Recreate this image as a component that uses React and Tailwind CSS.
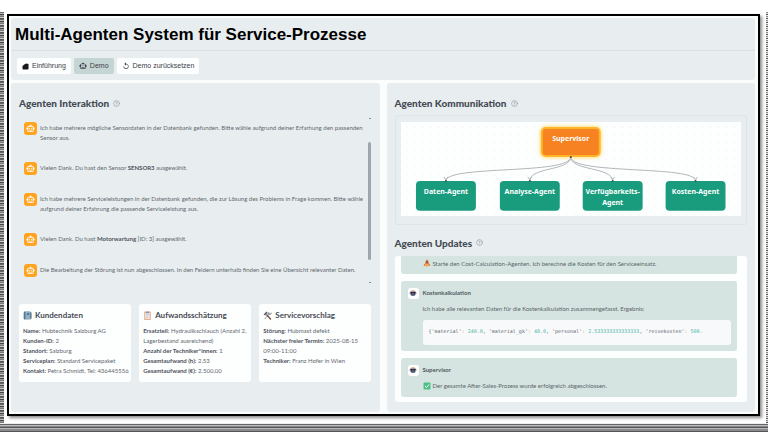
import { CircleHelp } from 'lucide-react'
import { MdOutlineSmartToy, MdReplay } from 'react-icons/md'

const messages = [
  ['Ich habe mehrere mögliche Sensordaten in der Datenbank gefunden. Bitte wähle aufgrund deiner Erfarhung den passenden', <br key="b" />, 'Sensor aus.'],
  ['Vielen Dank. Du hast den Sensor ', <b key="b" className="text-[#4d525c]">SENSOR3</b>, ' ausgewählt.'],
  ['Ich habe mehrere Serviceleistungen in der Datenbank gefunden, die zur Lösung des Problems in Frage kommen. Bitte wähle', <br key="b" />, 'aufgrund deiner Erfahrung die passende Serviceleistung aus.'],
  ['Vielen Dank. Du hast ', <b key="b" className="text-[#4d525c]">Motorwartung</b>, ' [ID: 3] ausgewählt.'],
  ['Die Bearbeitung der Störung ist nun abgeschlossen. In den Feldern unterhalb finden Sie eine Übersicht relevanter Daten.'],
]

const cards = [
  {
    title: 'Kundendaten',
    icon: BookIcon,
    rows: [
      ['Name:', 'Hubtechnik Salzburg AG'],
      ['Kunden-ID:', '2'],
      ['Standort:', 'Salzburg'],
      ['Serviceplan:', 'Standard Servicepaket'],
      ['Kontakt:', 'Petra Schmidt, Tel: 436445556'],
    ],
  },
  {
    title: 'Aufwandsschätzung',
    icon: ClipboardIcon,
    rows: [
      ['Ersatzteil:', 'Hydraulikschlauch (Anzahl 2,', 'Lagerbestand ausreichend)'],
      ['Anzahl der Techniker*innen:', '1'],
      ['Gesamtaufwand (h):', '2.53'],
      ['Gesamtaufwand (€):', '2.500,00'],
    ],
  },
  {
    title: 'Servicevorschlag',
    icon: ToolsIcon,
    rows: [
      ['Störung:', 'Hubmast defekt'],
      ['Nächster freier Termin:', '2025-08-15', '09:00-11:00'],
      ['Techniker:', 'Franz Hofer in Wien'],
    ],
  },
]

const result = [
  ['material', '240.0'],
  ['material_gk', '48.0'],
  ['personal', '2.533333333333333'],
  ['reisekosten', '500.'],
]

const agents = [
  { lines: ['Daten-Agent'], x: 15 },
  { lines: ['Analyse-Agent'], x: 99 },
  { lines: ['Verfügbarkeits-', 'Agent'], x: 182 },
  { lines: ['Kosten-Agent'], x: 265 },
]

function HouseIcon() {
  return (
    <svg viewBox="0 0 14 14" className="size-[7px] shrink-0" fill="#16181b">
      <path d="M1 6 6 2l3-1 4 1v10l-2 1H2l-1-1z" />
    </svg>
  )
}

function BookIcon() {
  return (
    <svg viewBox="0 0 16 16" className="size-[9px] shrink-0">
      <path d="M3 1h10l2 2v10l-2 2H3l-2-2V3z" fill="#7f9bb0" />
      <path d="M5 1h7v13H5z" fill="#8fb0c8" />
      <path d="M3 1v14M14 3v10" stroke="#4a6579" strokeWidth="1.5" />
      <path d="M7 4h4v3H7z" fill="#4d6e87" />
    </svg>
  )
}

function ClipboardIcon() {
  return (
    <svg viewBox="0 0 16 16" className="size-[9px] shrink-0">
      <rect x="2" y="1" width="12" height="15" rx="1" fill="#e8b48c" />
      <path d="M4 3h8v11H4z" fill="#f1eef0" />
      <path d="M5 1h6v3H5z" fill="#8d98a7" />
      <path d="M5 6h6M5 9h6M5 12h4" stroke="#a7b1c4" />
    </svg>
  )
}

function ToolsIcon() {
  return (
    <svg viewBox="0 0 16 16" className="size-[9px] shrink-0" fill="none">
      <path d="m3 14 9-10" stroke="#b0b8be" strokeWidth="2" />
      <path d="M10 2v3l3 1 2-3" stroke="#8d989f" strokeWidth="2" />
      <path d="m6 6 8 9" stroke="#7b4b42" strokeWidth="2.5" />
      <path d="m1 6 5-5 3 3-3 1-2 3z" fill="#59656e" />
    </svg>
  )
}

function RocketIcon() {
  return (
    <svg viewBox="0 0 16 16" className="size-2 shrink-0">
      <path d="M8 1c4 2 4 6 3 10H5C4 7 5 3 8 1z" fill="#d9743a" />
      <path d="M5 8 1 13l4 1zM11 8l4 5-4 1z" fill="#e0632d" />
      <path d="M4 11h8l-2 4H6z" fill="#f6a93c" />
      <circle cx="8" cy="6" r="2" fill="#8f5b4a" />
    </svg>
  )
}

function CheckIcon() {
  return (
    <svg viewBox="0 0 16 16" className="size-2 shrink-0">
      <rect x="1" y="1" width="14" height="14" rx="2" fill="#4dc088" />
      <path d="m4 8 3 3 5-6" fill="none" stroke="#fff" strokeWidth="2" />
    </svg>
  )
}

function BotFace() {
  return (
    <svg viewBox="0 0 24 24" className="size-2">
      <path d="M4 8h16l3 4-3 5-3 3H7l-3-3-3-5z" fill="#9298aa" />
      <path d="M7 3h10v5H7z" fill="#e4bda4" />
      <path d="M4 8h16v5H4z" fill="#3c354d" />
      <path d="M6 13h12v5l-3 2H9l-3-2z" fill="#555b70" />
      <circle cx="8" cy="12" r="2" fill="#252536" />
      <circle cx="16" cy="12" r="2" fill="#252536" />
    </svg>
  )
}

function Heading({ children }) {
  return (
    <h2 className="flex items-center gap-1 text-[10px] leading-4 font-black text-[#454a55]">
      {children}
      <CircleHelp size={7} className="text-[#8b929b]" />
    </h2>
  )
}

function Card({ title, icon: Icon, rows }) {
  return (
    <article className="min-w-0 rounded-[3px] bg-[#fdfefe] px-1 py-1.5">
      <h3 className="flex items-center gap-[3px] text-[8px] leading-[10px] font-bold text-[#464b54]">
        <Icon />
        {title}
      </h3>
      <dl className="mt-1.5 text-[6px] leading-[10px] whitespace-nowrap text-[#62676f]">
        {rows.map(([label, value, rest]) => (
          <div key={label}>
            <dt className="inline font-bold text-[#4d525c]">{label}</dt> <dd className="inline">{value}</dd>
            {rest && <dd>{rest}</dd>}
          </div>
        ))}
      </dl>
    </article>
  )
}

function AgentGraph() {
  return (
    <div className="rounded-[3px] border border-[#dde3e6] px-[5px] pt-1.5 pb-2">
      <svg viewBox="0 0 341 94" className="block w-full bg-[#fdfefe] font-['Noto_Sans',sans-serif] text-[7px] font-bold">
        <defs>
          <pattern id="dots" width="8" height="8" patternUnits="userSpaceOnUse">
            <circle cx="6" cy="5" r=".5" fill="#e3e5e8" />
          </pattern>
          <filter id="glow" x="-20%" y="-30%" width="140%" height="160%">
            <feDropShadow dx="0" dy="0" stdDeviation="2" floodColor="#ffd43b" floodOpacity="1" />
          </filter>
        </defs>
        <rect width="341" height="94" fill="url(#dots)" />
        <rect x="141" y="6" width="58" height="28" rx="4" fill="#f68220" stroke="#ffb52c" strokeWidth="2" filter="url(#glow)" />
        <text x="170" y="19" fill="#fff" textAnchor="middle">Supervisor</text>
        <g fill="none" stroke="#b3b5bb">
          <path d="M170 35C170 53 45 43 45 59" />
          <path d="M170 35C170 49 129 45 129 59" />
          <path d="M170 35C170 49 212 45 212 59" />
          <path d="M170 35C170 53 295 43 295 59" />
          <path d="m43 55 2 3 2-3m80 0 2 3 2-3m79 0 2 3 2-3m79 0 2 3 2-3" />
        </g>
        <circle cx="170" cy="35" r="1" fill="#454552" />
        {agents.map(({ lines, x }) => (
          <g key={x}>
            <rect x={x} y="59" width="60" height="30" rx="4" fill="#189c7d" />
            <circle cx={x + 30} cy="59" r="1" fill="#42505a" />
            {lines.map((line, i) => (
              <text key={line} x={x + 30} y={72 + i * 11} fill="#fff" textAnchor="middle">
                {line}
              </text>
            ))}
          </g>
        ))}
      </svg>
    </div>
  )
}

function Update({ title, children }) {
  return (
    <article className="flex gap-1 rounded-[3px] bg-[#d5e4e0] pt-[7px] pr-1.5 pb-1.5 pl-[7px]">
      <span className="flex size-[11px] shrink-0 items-center justify-center rounded-[3px] bg-white">
        <BotFace />
      </span>
      <div className="min-w-0 flex-1">
        <h3 className="text-[6px] leading-[10px] font-bold text-[#515963]">{title}</h3>
        {children}
      </div>
    </article>
  )
}

export default function App() {
  return (
    <div className="flex min-h-screen flex-col overflow-hidden bg-white font-[Lato,sans-serif]">
      <div className="flex flex-1 pt-3">
        <div className="w-1 bg-[repeating-linear-gradient(#666_0_1px,#bbb_1px_2px,#444_2px_3px,#999_3px_4px,#777_4px_5px,#ccc_5px_6px,#555_6px_7px)]" />
        <div className="mt-0.5 mr-1.5 mb-[7px] ml-[3px] flex min-w-0 flex-1 flex-col gap-[3px] border-2 border-black bg-[#fbfcfc] py-0.5 pr-[3px] pl-0.5 shadow-[2px_2px_3px_#888]">
          <header className="rounded-[3px] bg-[#e8eef0]">
            <h1 className="border-b border-[#dbe1e4] px-1 pt-[5px] pb-[3px] font-['Liberation_Sans',Arial,sans-serif] text-[17px] leading-6 font-bold text-black">
              Multi-Agenten System für Service-Prozesse
            </h1>
            <nav className="flex gap-[3px] px-1.5 pt-[7px] pb-1.5 font-['Liberation_Sans',Arial,sans-serif] text-[7px] leading-4 text-[#3c4149]">
              <button className="flex items-center gap-[3px] rounded-[2px] bg-[#fdfefe] px-[5px]">
                <HouseIcon />Einführung
              </button>
              <button className="flex items-center gap-[3px] rounded-[2px] bg-[#c5d5d4] px-[5px]">
                <MdOutlineSmartToy size={8} />Demo
              </button>
              <button className="flex items-center gap-[3px] rounded-[2px] bg-[#fdfefe] px-[5px]">
                <MdReplay size={8} />Demo zurücksetzen
              </button>
            </nav>
          </header>

          <main className="grid flex-1 grid-cols-2 gap-[7px]">
            <section className="min-w-0 rounded-[3px] bg-[#e8eef0] px-2 pt-3">
              <Heading>Agenten Interaktion</Heading>
              <div className="mt-[7px] flex">
                <div className="min-w-0 flex-1 pl-[5px] text-[6px] leading-[10px] whitespace-nowrap text-[#62676f]">
                  {messages.map((message, i) => (
                    <div key={i} className="flex min-h-[31px] gap-[3px] odd:min-h-10">
                      <span className="mt-1 flex size-[13px] shrink-0 items-center justify-center rounded-[3px] bg-[#ffa421] text-white">
                        <MdOutlineSmartToy size={9} />
                      </span>
                      <p className="pt-[5px]">{message}</p>
                    </div>
                  ))}
                </div>
                <div className="flex w-1 flex-col items-center justify-between pb-[17px]">
                  <span className="h-px w-0.5 bg-[#8b9199]" />
                  <div className="h-[118px] w-[3px] rounded-full bg-[#a0a6af]" />
                  <span className="h-px w-0.5 bg-[#8b9199]" />
                </div>
              </div>
              <div className="mt-1 grid grid-cols-3 gap-2">
                {cards.map((card) => (
                  <Card key={card.title} {...card} />
                ))}
              </div>
            </section>

            <section className="min-w-0 rounded-[3px] bg-[#e8eef0] px-2 pt-3 pb-2">
              <Heading>Agenten Kommunikation</Heading>
              <div className="mt-1">
                <AgentGraph />
              </div>
              <div className="mt-2.5">
                <Heading>Agenten Updates</Heading>
              </div>
              <div className="mt-[5px] rounded-[3px] bg-[#fdfefe] pr-2.5 pb-[5px] pl-1.5 text-[6px] text-[#5c646c]">
                <div className="flex items-start gap-0.5 rounded-b-[3px] bg-[#d5e4e0] pt-[3px] pb-[5px] pl-[22px] leading-[10px]">
                  <RocketIcon />
                  Starte den Cost-Calculation-Agenten. Ich berechne die Kosten für den Serviceeinsatz.
                </div>
                <div className="mt-[7px] space-y-[7px]">
                  <Update title="Kostenkalkulation">
                    <p className="mt-1.5 leading-[10px]">Ich habe alle relevanten Daten für die Kostenkalkulation zusammengefasst. Ergebnis:</p>
                    <pre className="mt-1.5 overflow-hidden rounded-[3px] bg-[#f8f9fb] px-1.5 pt-1.5 pb-[9px] font-['DejaVu_Sans_Mono',monospace] text-[5px] leading-[10px]">
                      {'{'}
                      {result.map(([key, value], i) => (
                        <span key={key}>
                          {i > 0 && ', '}'{key}'<span className="text-[#e99a61]">:</span>{' '}
                          <span className="text-[#48b5a2]">{value}</span>
                        </span>
                      ))}
                    </pre>
                  </Update>
                  <Update title="Supervisor">
                    <p className="mt-1.5 flex items-center gap-0.5 leading-[10px]">
                      <CheckIcon />
                      Der gesamte After-Sales-Prozess wurde erfolgreich abgeschlossen.
                    </p>
                  </Update>
                </div>
              </div>
            </section>
          </main>
        </div>
        <div className="w-0.5 bg-[repeating-linear-gradient(#888_0_1px,#ddd_1px_2px,#555_2px_3px,#eee_3px_4px)]" />
      </div>
      <div className="h-[9px] bg-[linear-gradient(#eee_0_1px,#666_1px_2px,#bbb_2px_3px,#8a8a90_3px_4px,#555_4px_5px,#bbb_5px_6px,#88888e_6px_8px,#555_8px_9px)]" />
    </div>
  )
}
